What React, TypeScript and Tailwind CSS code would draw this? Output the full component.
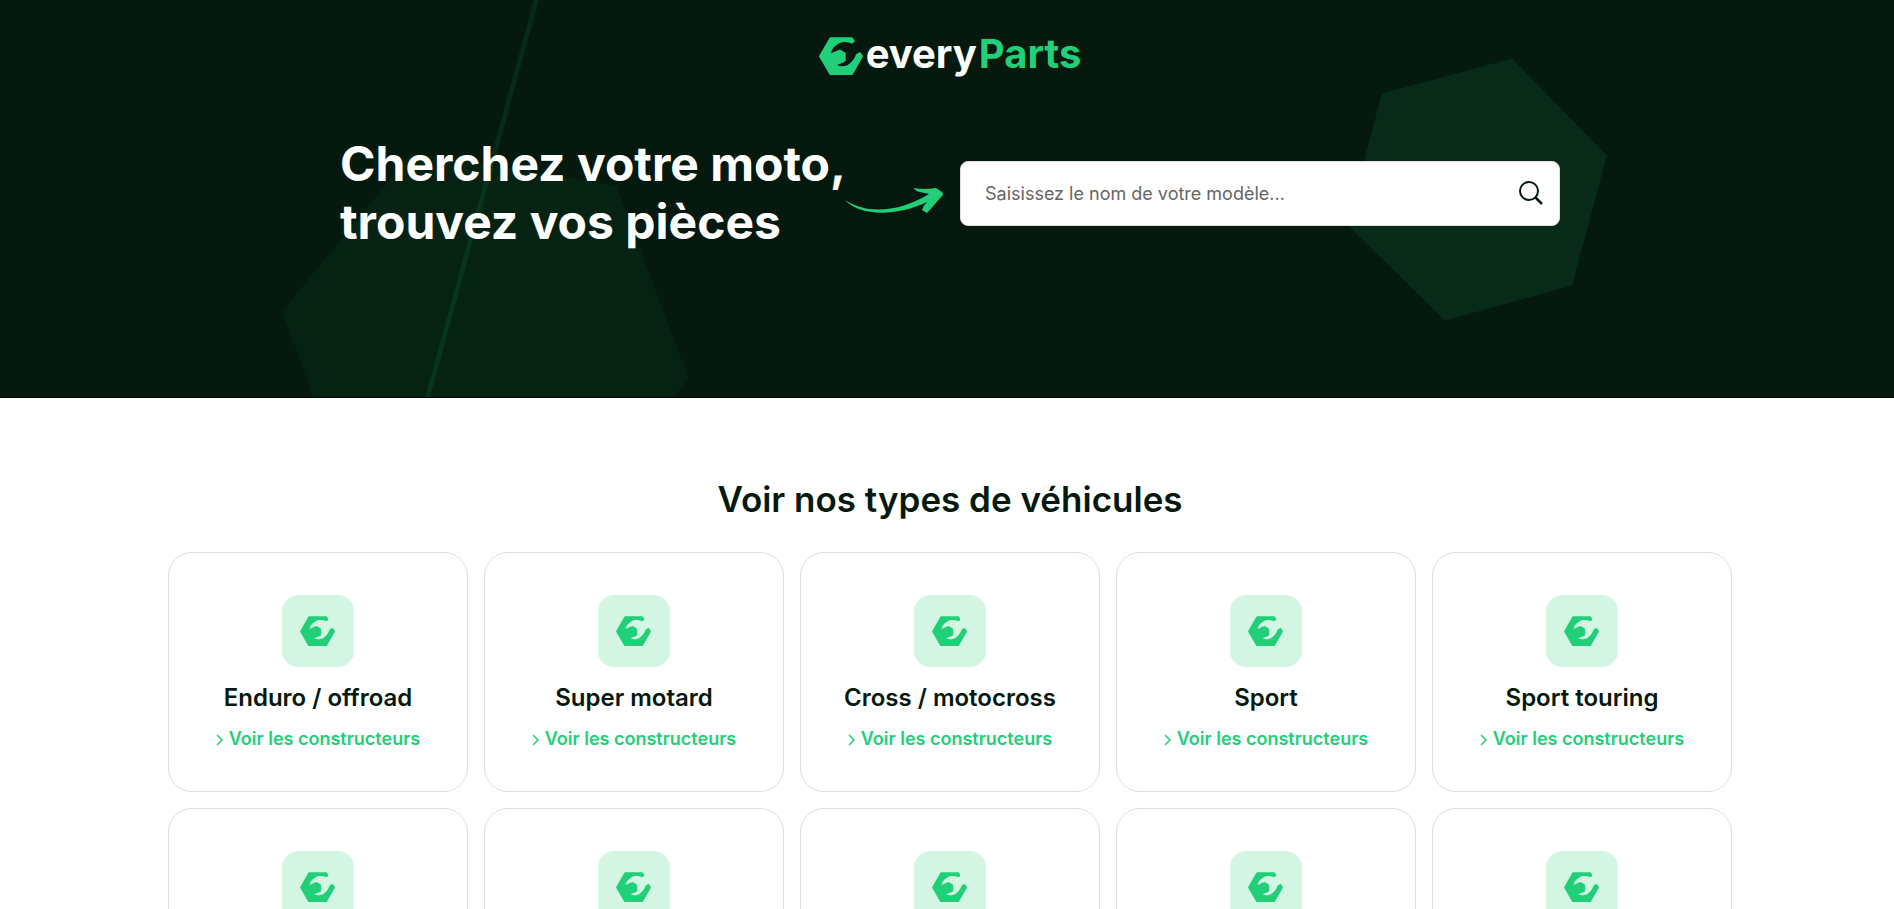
import { useState } from "react";

const vehicleTypes = [
  "Enduro / offroad",
  "Super motard",
  "Cross / motocross",
  "Sport",
  "Sport touring",
  "Roadster",
  "Trail",
  "Custom",
  "Scooter",
  "Quad",
];

function NutIcon({ className }: { className: string }) {
  return (
    <svg viewBox="0 0 130 114" className={className} fill="currentColor" aria-hidden="true">
      <path d="M34 1H97Q99 1 100 3L105 11Q106 13 104 15L99 19Q97 20 95 19C84 13 69 13 57 20C45 27 37 36 36 48L56 39L60 38Q62 37 64 38L77 46Q79 47 79 50V68Q79 71 76 73L54 83C66 89 80 87 89 80C100 72 106 62 109 52L119 45Q122 44 124 47L129 55Q130 57 129 59L99 112Q98 113 96 113H34Q32 113 31 111L1 59Q0 57 1 55L31 3Q32 1 34 1Z" />
    </svg>
  );
}

function HeroShapes() {
  return (
    <svg
      viewBox="0 0 1894 398"
      preserveAspectRatio="xMidYMid slice"
      className="absolute inset-0 h-full w-full"
      fill="#22cf79"
      aria-hidden="true"
    >
      <path d="M282 312L412 153L616 186L689 379L560 540L355 510Z" opacity="0.05" />
      <path d="M1382 94L1512 59L1607 156L1572 286L1445 321L1347 225Z" opacity="0.1" />
      <path d="M534 0H539L430 398H425Z" opacity="0.1" />
    </svg>
  );
}

function VehicleCard({ name }: { name: string }) {
  return (
    <li className="flex h-60 flex-col items-center rounded-3xl border border-[#dedede] bg-white pt-[42px]">
      <span className="flex size-[72px] items-center justify-center rounded-2xl bg-[#d3f5e4] text-[#22cf79]">
        <NutIcon className="mr-0.5 w-[35px]" />
      </span>
      <h3 className="mt-[15px] text-2xl leading-8 font-semibold">{name}</h3>
      <a href="#constructeurs" className="mt-[11px] flex items-center gap-1.5 text-lg leading-7 font-semibold text-[#22cf79]">
        <svg viewBox="0 0 7 12" className="mt-0.5 h-3 w-[7px]" fill="none" stroke="currentColor" strokeWidth="1.5" aria-hidden="true">
          <path d="M1 1L6 6L1 11" />
        </svg>
        Voir les constructeurs
      </a>
    </li>
  );
}

export default function App() {
  const [query, setQuery] = useState("");

  return (
    <div className="overflow-hidden bg-white font-['Inter',sans-serif] text-[#05190e]">
      <header className="relative h-[398px] border-b border-black bg-[#05190e] pl-1.5">
        <HeroShapes />
        <div className="relative mx-auto max-w-[1220px]">
          <a href="#accueil" className="mx-auto flex w-fit items-center gap-[3px] pt-[30px] text-[40px] leading-[48px] font-bold text-white">
            <NutIcon className="w-11 text-[#22cf79]" />
            <span className="flex gap-0.5 pb-1">
              every<span className="text-[#22cf79]">Parts</span>
            </span>
          </a>
          <div className="mt-[53px] flex items-center">
            <h1 className="w-[504px] text-5xl leading-[58px] font-bold whitespace-nowrap text-white">
              Cherchez votre moto,
              <br />
              trouvez vos pièces
            </h1>
            <svg viewBox="0 0 100 28" className="mt-3.5 h-7 w-[100px] text-[#22cf79]" fill="currentColor" aria-hidden="true">
              <path d="M1 14C22 28 54 27 85 8L76 6Q71 5 70 2Q80 4 92 2L98 6Q100 8 98 10L83 27L78 24Q79 20 83 16C54 30 16 31 1 14Z" />
            </svg>
            <form role="search" className="ml-4 flex h-[65px] flex-1 items-center rounded-lg border border-[#dedede] bg-white pr-4 pl-6">
              <input
                type="text"
                aria-label="Nom de votre modèle"
                placeholder="Saisissez le nom de votre modèle..."
                value={query}
                onChange={(event) => setQuery(event.target.value)}
                className="h-full flex-1 text-lg text-[#05190e] outline-none placeholder:text-[#666666]"
              />
              <button type="button" aria-label="Rechercher" className="text-[#05190e]">
                <svg viewBox="0 0 24 24" className="size-6" fill="none" stroke="currentColor" strokeWidth="2">
                  <circle cx="10" cy="10" r="9" />
                  <path d="M16 16L23 23" strokeWidth="2.5" />
                </svg>
              </button>
            </form>
          </div>
        </div>
      </header>
      <main className="pl-1.5">
        <section className="mx-auto max-w-[1564px] pt-20 pb-20">
          <h2 className="text-center text-[35px] leading-[42px] font-semibold">Voir nos types de véhicules</h2>
          <ul className="mt-8 grid grid-cols-5 gap-4">
            {vehicleTypes.map((name) => (
              <VehicleCard key={name} name={name} />
            ))}
          </ul>
        </section>
      </main>
    </div>
  );
}
